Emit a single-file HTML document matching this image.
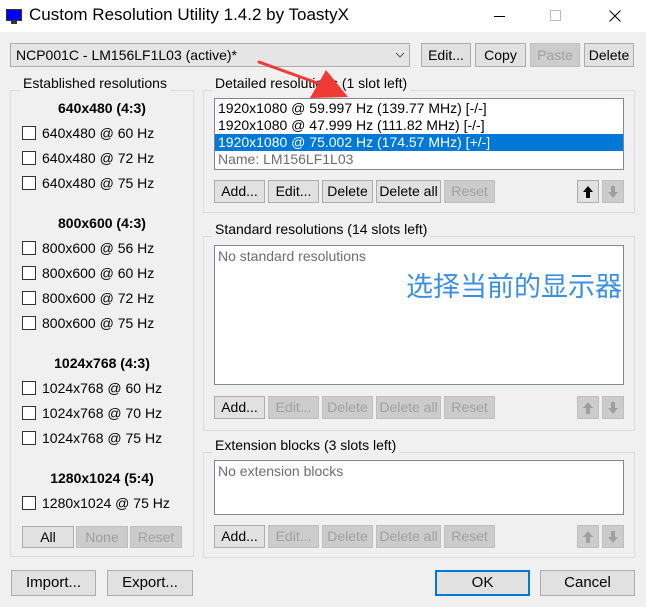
<!DOCTYPE html>
<html><head><meta charset="utf-8"><style>
*{box-sizing:border-box;margin:0;padding:0}
body{width:646px;height:607px;background:#f0f0f0;font:14px "Liberation Sans",sans-serif;color:#000;position:relative;overflow:hidden}
.a{position:absolute;white-space:nowrap}
.tb{left:0;top:0;width:646px;height:32px;background:#fff}
.btn{position:absolute;background:#e1e1e1;border:1px solid #adadad;text-align:center;font-size:14px}
.dis{color:#a0a0a0;background:#cccccc;border-color:#bfbfbf}
.grp{position:absolute;border:1px solid #dcdcdc}
.gt{position:absolute;background:#f0f0f0;padding:0 3px;font-size:14px}
.lb{position:absolute;background:#fff;border:1px solid #828790}
.cb{position:absolute;width:14px;height:14px;border:1px solid #333;background:#fff}
.bold{font-weight:bold;position:absolute;text-align:center;width:184px;left:10px}
.ar{position:absolute;display:flex;align-items:center;justify-content:center}
</style></head><body>
<div class="a tb"></div>
<div class="a" style="left:6px;top:9px;width:16px;height:12px;background:#0000ee;border:1px solid #333"></div>
<div class="a" style="left:11px;top:21px;width:6px;height:3px;background:#333"></div>
<div class="a" style="left:29px;top:5px;font-size:17px">Custom Resolution Utility 1.4.2 by ToastyX</div>
<div class="a" style="left:494px;top:16px;width:11px;height:1px;background:#000"></div>
<div class="a" style="left:550px;top:10px;width:11px;height:11px;border:1px solid #bbb"></div>
<svg class="a" style="left:609px;top:10px" width="12" height="12"><path d="M0.5 0.5L11.5 11.5M11.5 0.5L0.5 11.5" stroke="#000" stroke-width="1"/></svg>

<div class="a" style="left:10px;top:43px;width:400px;height:24px;background:#e5e5e5;border:1px solid #acacac;padding:3px 5px">NCP001C - LM156LF1L03 (active)*</div>
<svg class="a" style="left:395px;top:52px" width="10" height="6"><path d="M1 1L5 5L9 1" stroke="#555" fill="none"/></svg>
<div class="btn" style="left:421px;top:43px;width:50px;height:24px;line-height:22px">Edit...</div>
<div class="btn" style="left:475px;top:43px;width:51px;height:24px;line-height:22px">Copy</div>
<div class="btn dis" style="left:530px;top:43px;width:50px;height:24px;line-height:22px">Paste</div>
<div class="btn" style="left:584px;top:43px;width:50px;height:24px;line-height:22px">Delete</div>

<div class="grp" style="left:10px;top:90px;width:184px;height:467px"></div>
<div class="gt" style="left:20px;top:75px">Established resolutions</div>
<div class="bold" style="top:100px">640x480 (4:3)</div>
<div class="cb" style="left:22px;top:126px"></div><div class="a" style="left:42px;top:125px">640x480 @ 60 Hz</div>
<div class="cb" style="left:22px;top:151px"></div><div class="a" style="left:42px;top:150px">640x480 @ 72 Hz</div>
<div class="cb" style="left:22px;top:176px"></div><div class="a" style="left:42px;top:175px">640x480 @ 75 Hz</div>
<div class="bold" style="top:215px">800x600 (4:3)</div>
<div class="cb" style="left:22px;top:241px"></div><div class="a" style="left:42px;top:240px">800x600 @ 56 Hz</div>
<div class="cb" style="left:22px;top:266px"></div><div class="a" style="left:42px;top:265px">800x600 @ 60 Hz</div>
<div class="cb" style="left:22px;top:291px"></div><div class="a" style="left:42px;top:290px">800x600 @ 72 Hz</div>
<div class="cb" style="left:22px;top:316px"></div><div class="a" style="left:42px;top:315px">800x600 @ 75 Hz</div>
<div class="bold" style="top:355px">1024x768 (4:3)</div>
<div class="cb" style="left:22px;top:381px"></div><div class="a" style="left:42px;top:380px">1024x768 @ 60 Hz</div>
<div class="cb" style="left:22px;top:406px"></div><div class="a" style="left:42px;top:405px">1024x768 @ 70 Hz</div>
<div class="cb" style="left:22px;top:431px"></div><div class="a" style="left:42px;top:430px">1024x768 @ 75 Hz</div>
<div class="bold" style="top:470px">1280x1024 (5:4)</div>
<div class="cb" style="left:22px;top:496px"></div><div class="a" style="left:42px;top:495px">1280x1024 @ 75 Hz</div>
<div class="btn" style="left:22px;top:526px;width:52px;height:22px;line-height:20px">All</div>
<div class="btn dis" style="left:76px;top:526px;width:52px;height:22px;line-height:20px">None</div>
<div class="btn dis" style="left:130px;top:526px;width:52px;height:22px;line-height:20px">Reset</div>

<div class="grp" style="left:203px;top:90px;width:432px;height:123px"></div>
<div class="gt" style="left:212px;top:75px">Detailed resolutions (1 slot left)</div>
<div class="lb" style="left:214px;top:98px;width:410px;height:72px"></div>
<div class="a" style="left:218px;top:100px">1920x1080 @ 59.997 Hz (139.77 MHz) [-/-]</div>
<div class="a" style="left:218px;top:117px">1920x1080 @ 47.999 Hz (111.82 MHz) [-/-]</div>
<div class="a" style="left:215px;top:134px;width:408px;height:17px;background:#0078d7"></div>
<div class="a" style="left:218px;top:134px;color:#fff">1920x1080 @ 75.002 Hz (174.57 MHz) [+/-]</div>
<div class="a" style="left:218px;top:151px;color:#6d6d6d">Name: LM156LF1L03</div>
<div class="btn" style="left:214px;top:180px;width:51px;height:23px;line-height:21px">Add...</div>
<div class="btn" style="left:268px;top:180px;width:51px;height:23px;line-height:21px">Edit...</div>
<div class="btn" style="left:322px;top:180px;width:51px;height:23px;line-height:21px">Delete</div>
<div class="btn" style="left:376px;top:180px;width:65px;height:23px;line-height:21px">Delete all</div>
<div class="btn dis" style="left:444px;top:180px;width:51px;height:23px;line-height:21px">Reset</div>
<div class="btn ar" style="left:577px;top:180px;width:22px;height:23px"><svg width="10" height="12"><path d="M5 0L10 6H7V12H3V6H0Z" fill="#000"/></svg></div>
<div class="btn dis ar" style="left:602px;top:180px;width:22px;height:23px"><svg width="10" height="12"><path d="M5 12L10 6H7V0H3V6H0Z" fill="#a0a0a0"/></svg></div>

<div class="grp" style="left:203px;top:236px;width:432px;height:195px"></div>
<div class="gt" style="left:212px;top:221px">Standard resolutions (14 slots left)</div>
<div class="lb" style="left:214px;top:245px;width:410px;height:140px"></div>
<div class="a" style="left:218px;top:248px;color:#6d6d6d">No standard resolutions</div>
<div class="a" style="left:406px;top:267px;font:27px 'Noto Sans CJK SC',sans-serif;color:#3b8fe0;line-height:36px">选择当前的显示器</div>
<div class="btn" style="left:214px;top:396px;width:51px;height:23px;line-height:21px">Add...</div>
<div class="btn dis" style="left:268px;top:396px;width:51px;height:23px;line-height:21px">Edit...</div>
<div class="btn dis" style="left:322px;top:396px;width:51px;height:23px;line-height:21px">Delete</div>
<div class="btn dis" style="left:376px;top:396px;width:65px;height:23px;line-height:21px">Delete all</div>
<div class="btn dis" style="left:444px;top:396px;width:51px;height:23px;line-height:21px">Reset</div>
<div class="btn dis ar" style="left:577px;top:396px;width:22px;height:23px"><svg width="10" height="12"><path d="M5 0L10 6H7V12H3V6H0Z" fill="#a0a0a0"/></svg></div>
<div class="btn dis ar" style="left:602px;top:396px;width:22px;height:23px"><svg width="10" height="12"><path d="M5 12L10 6H7V0H3V6H0Z" fill="#a0a0a0"/></svg></div>

<div class="grp" style="left:203px;top:452px;width:432px;height:106px"></div>
<div class="gt" style="left:212px;top:437px">Extension blocks (3 slots left)</div>
<div class="lb" style="left:214px;top:460px;width:410px;height:55px"></div>
<div class="a" style="left:218px;top:463px;color:#6d6d6d">No extension blocks</div>
<div class="btn" style="left:214px;top:525px;width:51px;height:23px;line-height:21px">Add...</div>
<div class="btn dis" style="left:268px;top:525px;width:51px;height:23px;line-height:21px">Edit...</div>
<div class="btn dis" style="left:322px;top:525px;width:51px;height:23px;line-height:21px">Delete</div>
<div class="btn dis" style="left:376px;top:525px;width:65px;height:23px;line-height:21px">Delete all</div>
<div class="btn dis" style="left:444px;top:525px;width:51px;height:23px;line-height:21px">Reset</div>
<div class="btn dis ar" style="left:577px;top:525px;width:22px;height:23px"><svg width="10" height="12"><path d="M5 0L10 6H7V12H3V6H0Z" fill="#a0a0a0"/></svg></div>
<div class="btn dis ar" style="left:602px;top:525px;width:22px;height:23px"><svg width="10" height="12"><path d="M5 12L10 6H7V0H3V6H0Z" fill="#a0a0a0"/></svg></div>

<div class="btn" style="left:11px;top:570px;width:85px;height:26px;line-height:24px;font-size:15px">Import...</div>
<div class="btn" style="left:107px;top:570px;width:86px;height:26px;line-height:24px;font-size:15px">Export...</div>
<div class="btn" style="left:435px;top:570px;width:95px;height:26px;line-height:22px;font-size:15px;border:2px solid #0078d7">OK</div>
<div class="btn" style="left:540px;top:570px;width:95px;height:26px;line-height:24px;font-size:15px">Cancel</div>

<svg class="a" style="left:0;top:0" width="646" height="607"><line x1="259" y1="62" x2="320" y2="84" stroke="#ef3a36" stroke-width="3" stroke-linecap="round"/><polygon points="348,97 310,98 326,70" fill="#ef3a36"/></svg>
</body></html>
